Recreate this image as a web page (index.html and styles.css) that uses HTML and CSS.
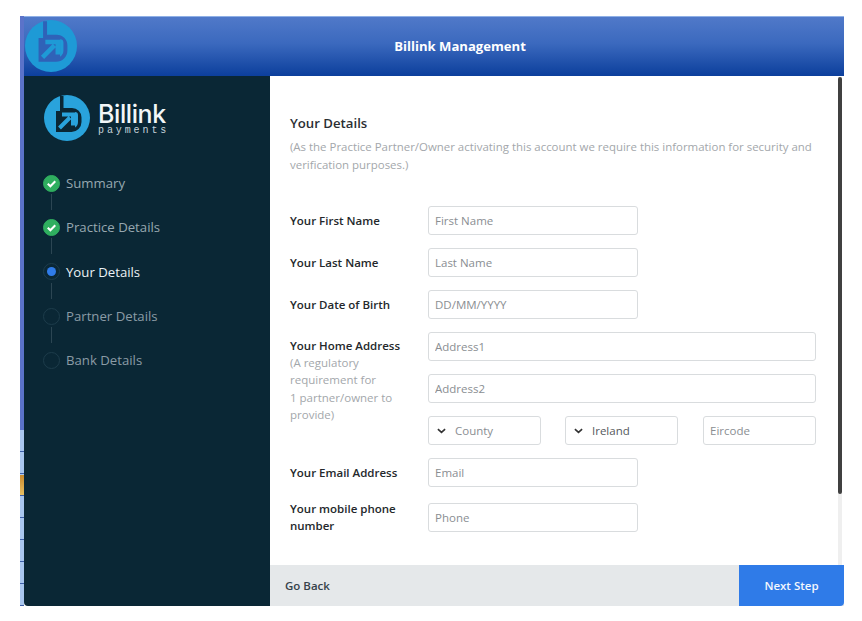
FILE: index.html
```html
<!DOCTYPE html>
<html lang="en">

<head>
    <link rel="stylesheet" href="styles.css">
</head>

<body>
    <div class="window">
        <div class="edge">
            <span class="edge-top"></span>
            <span class="edge-rest"></span>
        </div>
        <div class="app">
            <div class="header">
                <svg class="header-logo" viewBox="0 0 46 46">
                    <circle cx="23" cy="23" r="23" fill="#1e9ad6" />
                    <path d="M16 1h3.5v12H28a9.5 9.5 0 0 1 9.500 9.500V27a10 10 0 0 1-10 10H12V16h4z" fill="#2f62b8" />
                    <path d="M29.500 17H31a3 3 0 0 1 3 3v7a6.500 6.500 0 0 1-3 5.500V17z" fill="#1e9ad6" />
                    <path d="M15.500 33L26 22.500M18 19.500h11v11" fill="none" stroke="#1e9ad6" stroke-width="4" />
                </svg>
                <div class="header-title">Billink Management</div>
            </div>
            <div class="body">
                <div class="sidebar">
                    <div class="brand">
                        <svg class="brand-logo" viewBox="0 0 46 46">
                            <circle cx="23" cy="23" r="23" fill="#29a3dc" />
                            <path d="M16 1h3.500v12H28a9.500 9.500 0 0 1 9.500 9.500V27a10 10 0 0 1-10 10H12V16h4z" fill="#0a2735" />
                            <path d="M29.500 17H31a3 3 0 0 1 3 3v7a6.500 6.500 0 0 1-3 5.500V17z" fill="#29a3dc" />
                            <path d="M15.500 33L26 22.500M18 19.500h11v11" fill="none" stroke="#29a3dc" stroke-width="4" />
                        </svg>
                        <div class="brand-text">
                            <div class="brand-name">Billink</div>
                            <div class="brand-sub">payments</div>
                        </div>
                    </div>
                    <ul class="steps">
                        <li class="step done">
                            <span class="dot"><svg viewBox="0 0 16 16"><path d="M4 8.300l2.800 2.600L12 5.600" fill="none" stroke="#fff" stroke-width="2.200" /></svg></span>
                            Summary
                        </li>
                        <li class="step done">
                            <span class="dot"><svg viewBox="0 0 16 16"><path d="M4 8.300l2.800 2.600L12 5.600" fill="none" stroke="#fff" stroke-width="2.200" /></svg></span>
                            Practice Details
                        </li>
                        <li class="step active"><span class="dot"></span>Your Details</li>
                        <li class="step"><span class="dot"></span>Partner Details</li>
                        <li class="step"><span class="dot"></span>Bank Details</li>
                    </ul>
                </div>
                <div class="main">
                    <div class="content">
                        <h3>Your Details</h3>
                        <p class="intro">(As the Practice Partner/Owner activating this account we require this information for security and verification purposes.)</p>
                        <form class="details">
                            <label class="row-label">Your First Name</label>
                            <input class="field short" type="text" placeholder="First Name">

                            <label class="row-label">Your Last Name</label>
                            <input class="field short" type="text" placeholder="Last Name">

                            <label class="row-label">Your Date of Birth</label>
                            <input class="field short" type="text" placeholder="DD/MM/YYYY">

                            <div class="address-label">
                                <div class="row-label">Your Home Address</div>
                                <div class="hint">(A regulatory requirement for<br>1 partner/owner to provide)</div>
                            </div>
                            <div class="address">
                                <input class="field" type="text" placeholder="Address1">
                                <input class="field" type="text" placeholder="Address2">
                                <div class="address-row">
                                    <div class="select muted"><svg viewBox="0 0 10 6"><path d="M1 1l4 3.600L9 1" fill="none" stroke="#333" stroke-width="1.800" /></svg>County</div>
                                    <div class="select"><svg viewBox="0 0 10 6"><path d="M1 1l4 3.600L9 1" fill="none" stroke="#333" stroke-width="1.800" /></svg>Ireland</div>
                                    <input class="field" type="text" placeholder="Eircode">
                                </div>
                            </div>

                            <label class="row-label">Your Email Address</label>
                            <input class="field short" type="text" placeholder="Email">

                            <label class="row-label">Your mobile phone number</label>
                            <input class="field short" type="text" placeholder="Phone">
                        </form>
                    </div>
                    <div class="scrollbar"><span class="thumb"></span></div>
                    <div class="footer">
                        <span class="back">Go Back</span>
                        <span class="next">Next Step</span>
                    </div>
                </div>
            </div>
        </div>
    </div>
</body>

</html>
```

FILE: styles.css
```css
* {
    box-sizing: border-box;
}

body {
    font-family: "Open Sans", "Noto Sans", sans-serif;
    background-color: #FFFFFF;
    margin: 0;
    padding: 16px 18px 15px 20px;
    height: 621px;
    overflow: hidden;
}

.window {
    display: flex;
    height: 590px;
}

.edge {
    width: 4px;
    display: flex;
    flex-direction: column;
    flex-shrink: 0;
}

.edge-top {
    height: 414px;
    background: #5B73C9;
}

.edge-rest {
    flex: 1;
    background:
        linear-gradient(#C98A2E, #E8C063) 0 45px / 100% 20px no-repeat,
        repeating-linear-gradient(#A9C6EE 0, #A9C6EE 21px, #3E5FA8 21px, #3E5FA8 22px);
}

.app {
    flex: 1;
    display: flex;
    flex-direction: column;
    min-width: 0;
}

.header {
    height: 60px;
    display: flex;
    align-items: center;
    justify-content: center;
    position: relative;
    padding: 0 0 2px 52px;
    border-top: 1px solid #8FB0E6;
    background: linear-gradient(#5079C9, #3B69BE 45%, #0C3F9C);
}

.header-logo {
    position: absolute;
    left: 1px;
    top: 3px;
    width: 52px;
    height: 52px;
}

.header-title {
    color: #FFFFFF;
    font-size: 13.1px;
    font-weight: 700;
}

.body {
    flex: 1;
    display: flex;
    min-height: 0;
}

.sidebar {
    width: 246px;
    flex-shrink: 0;
    background-color: #0A2735;
    border-bottom-left-radius: 4px;
    padding: 19px 0 0 20px;
}

.brand {
    display: flex;
    align-items: center;
    gap: 8px;
    height: 46px;
}

.brand-logo {
    width: 46px;
    height: 46px;
}

.brand-text {
    color: #F2F6F8;
    padding-top: 2px;
}

.brand-name {
    font-family: "Inter", sans-serif;
    font-size: 25px;
    font-weight: 500;
    line-height: 24px;
    letter-spacing: -0.4px;
}

.brand-sub {
    font-family: "Liberation Mono", monospace;
    font-size: 10px;
    line-height: 10px;
    letter-spacing: 2.900px;
    color: #C6D4DB;
}

.steps {
    list-style: none;
    margin: 20px 0 0 -1px;
    padding: 0;
}

.step {
    display: flex;
    align-items: center;
    gap: 6px;
    height: 44.300px;
    font-size: 13.200px;
    color: #8A9BA5;
    position: relative;
}

.step:not(:last-child)::after {
    content: "";
    position: absolute;
    left: 8px;
    top: 33px;
    width: 1px;
    height: 16px;
    background: #2C4653;
}

.dot {
    width: 17px;
    height: 17px;
    border-radius: 50%;
    border: 1px solid #1D3C4B;
    display: flex;
    align-items: center;
    justify-content: center;
    flex-shrink: 0;
}

.dot svg {
    width: 15px;
    height: 15px;
}

.step.done {
    color: #97A7B0;
}

.step.done .dot {
    background: #2FAE5F;
    border-color: #2FAE5F;
}

.step.active {
    color: #EAF2F6;
}

.step.active .dot::before {
    content: "";
    width: 9px;
    height: 9px;
    border-radius: 50%;
    background: #2F7BE8;
}

.main {
    flex: 1;
    min-width: 0;
    display: flex;
    flex-direction: column;
    position: relative;
    background: #FFFFFF;
}

.content {
    flex: 1;
    padding: 38px 28px 0 20px;
    min-height: 0;
}

h3 {
    margin: 0;
    font-size: 13.200px;
    line-height: 19px;
    font-weight: 600;
    color: #2B2F33;
}

.intro {
    margin: 5px 0 0;
    font-size: 11.450px;
    line-height: 17.500px;
    color: #A3A7AB;
}

.details {
    display: grid;
    grid-template-columns: 138px 1fr;
    align-items: center;
    row-gap: 13px;
    margin-top: 33px;
}

.row-label {
    font-size: 11.500px;
    font-weight: 600;
    line-height: 17px;
    color: #24282B;
}

.field {
    width: 100%;
    height: 29px;
    border: 1px solid #D9DCDE;
    border-radius: 3px;
    padding: 0 6px;
    font-family: inherit;
    font-size: 11.500px;
    color: #444444;
    background: #FFFFFF;
}

.field::placeholder {
    color: #8A8E92;
    opacity: 1;
}

.field.short {
    width: 210px;
}

.address-label {
    align-self: start;
    padding-top: 5px;
}

.hint {
    font-size: 11.500px;
    line-height: 17.300px;
    color: #A3A7AB;
    width: 115px;
}

.address {
    display: flex;
    flex-direction: column;
    gap: 13px;
}

.address-row {
    display: grid;
    grid-template-columns: 137px 138px 113px;
}

.select {
    width: 113px;
    height: 29px;
    border: 1px solid #D9DCDE;
    border-radius: 3px;
    display: flex;
    align-items: center;
    padding-left: 8px;
    font-size: 11.500px;
    color: #55595C;
}

.select.muted {
    color: #8A8E92;
}

.select svg {
    width: 9px;
    height: 6px;
    margin-right: 9px;
}

.scrollbar {
    position: absolute;
    right: 2px;
    top: 1px;
    width: 4px;
    height: 488px;
    background: #EFEFEF;
}

.thumb {
    display: block;
    height: 417px;
    background: #404040;
    border-radius: 2px;
}

.footer {
    height: 41px;
    flex-shrink: 0;
    display: flex;
    align-items: stretch;
    justify-content: space-between;
    background: #E5E8EA;
    font-size: 11.500px;
    font-weight: 600;
}

.back {
    display: flex;
    align-items: center;
    padding-left: 15px;
    color: #37424A;
}

.next {
    width: 105px;
    display: flex;
    align-items: center;
    justify-content: center;
    background: #2F7BE8;
    color: #F2F7FE;
    border-bottom-right-radius: 4px;
}
```
